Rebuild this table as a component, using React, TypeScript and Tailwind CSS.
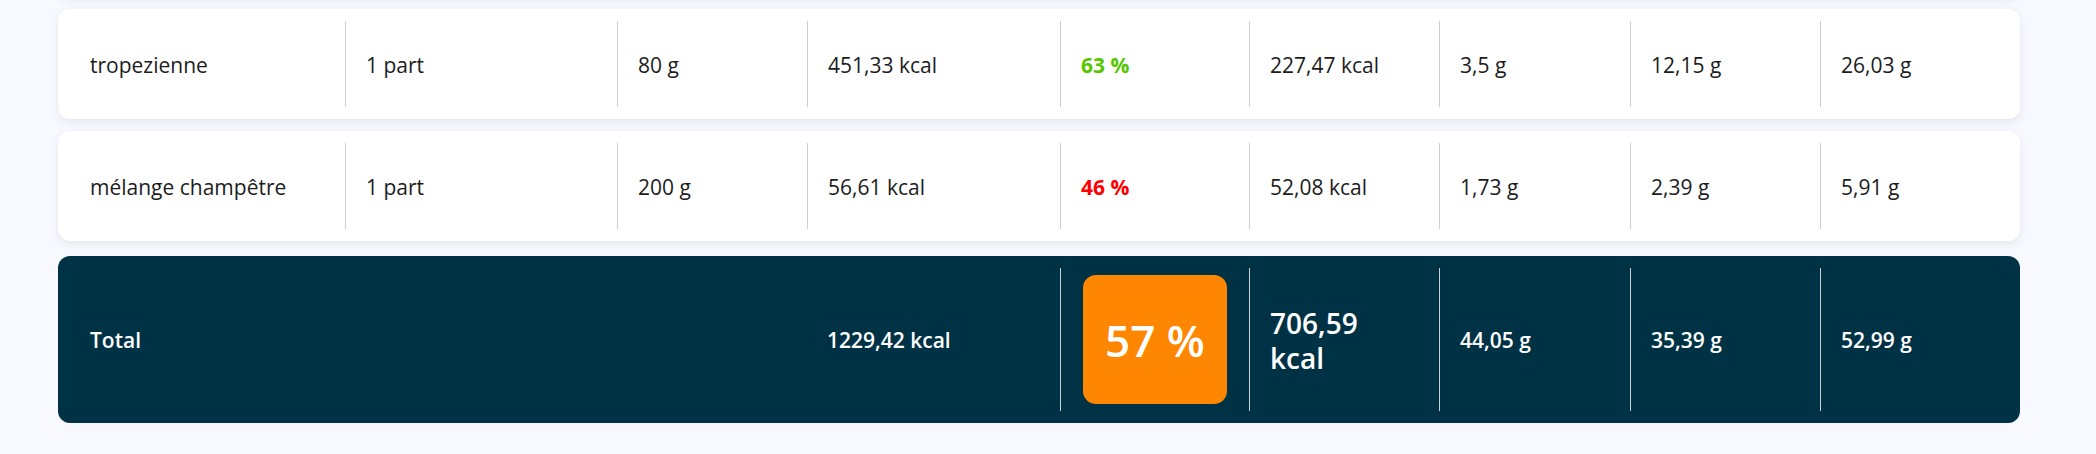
import React from 'react'

type Row = {
  name: string
  portion: string
  weight: string
  kcal: string
  pct: string
  good: boolean
  kcalAbs: string
  prot: string
  fat: string
  carb: string
}

const rows: Row[] = [
  {
    name: 'tropezienne',
    portion: '1 part',
    weight: '80 g',
    kcal: '451,33 kcal',
    pct: '63 %',
    good: true,
    kcalAbs: '227,47 kcal',
    prot: '3,5 g',
    fat: '12,15 g',
    carb: '26,03 g',
  },
  {
    name: 'mélange champêtre',
    portion: '1 part',
    weight: '200 g',
    kcal: '56,61 kcal',
    pct: '46 %',
    good: false,
    kcalAbs: '52,08 kcal',
    prot: '1,73 g',
    fat: '2,39 g',
    carb: '5,91 g',
  },
]

const grid =
  'grid grid-cols-[275px_272px_190px_253px_189px_190px_191px_190px_1fr]'

function Cell({ children, divider = true, dark = false }: { children?: React.ReactNode; divider?: boolean; dark?: boolean }) {
  return (
    <div
      className={`flex items-center pl-5 pt-[3px] ${divider ? (dark ? 'border-l border-[#c9ced2]' : 'border-l border-[#cfcfcf]') : ''}`}
    >
      {children}
    </div>
  )
}

export default function App() {
  return (
    <div className="min-h-screen bg-[#f7f9fe] pt-[9px] pl-[58px] pr-[76px] font-['Open_Sans','Liberation_Sans',sans-serif]">
      <div className="flex flex-col gap-3">
        {/* previous row, scrolled out of view */}
        <div className="-mt-[122px] h-[110px] rounded-xl bg-white shadow-[0_3px_8px_rgba(30,40,90,0.09)]" />

        {rows.map((r) => (
          <div
            key={r.name}
            className={`${grid} h-[110px] rounded-xl bg-white p-3 text-[21px] text-[#1c1c1c] shadow-[0_3px_8px_rgba(30,40,90,0.09)]`}
          >
            <Cell divider={false}>{r.name}</Cell>
            <Cell>{r.portion}</Cell>
            <Cell>{r.weight}</Cell>
            <Cell>{r.kcal}</Cell>
            <Cell>
              <span className={`font-bold ${r.good ? 'text-[#56c600]' : 'text-[#ff0000]'}`}>{r.pct}</span>
            </Cell>
            <Cell>{r.kcalAbs}</Cell>
            <Cell>{r.prot}</Cell>
            <Cell>{r.fat}</Cell>
            <Cell>{r.carb}</Cell>
          </div>
        ))}

        {/* total */}
        <div
          className={`${grid} mt-[3px] h-[167px] rounded-xl bg-[#003246] p-3 text-[21px] font-semibold text-white`}
        >
          <Cell divider={false}>Total</Cell>
          <Cell divider={false} />
          <Cell divider={false} />
          <Cell divider={false}>1229,42 kcal</Cell>
          <div className="flex items-center border-l border-[#c9ced2] py-[7px] pl-[22px] pr-[22px]">
            <div className="flex h-full w-full items-center justify-center rounded-[13px] bg-[#ff8600] text-[44px] font-semibold">
              57 %
            </div>
          </div>
          <Cell dark>
            <span className="max-w-[120px] text-[28px] font-semibold leading-[35px]">706,59 kcal</span>
          </Cell>
          <Cell dark>44,05 g</Cell>
          <Cell dark>35,39 g</Cell>
          <Cell dark>52,99 g</Cell>
        </div>
      </div>
    </div>
  )
}
